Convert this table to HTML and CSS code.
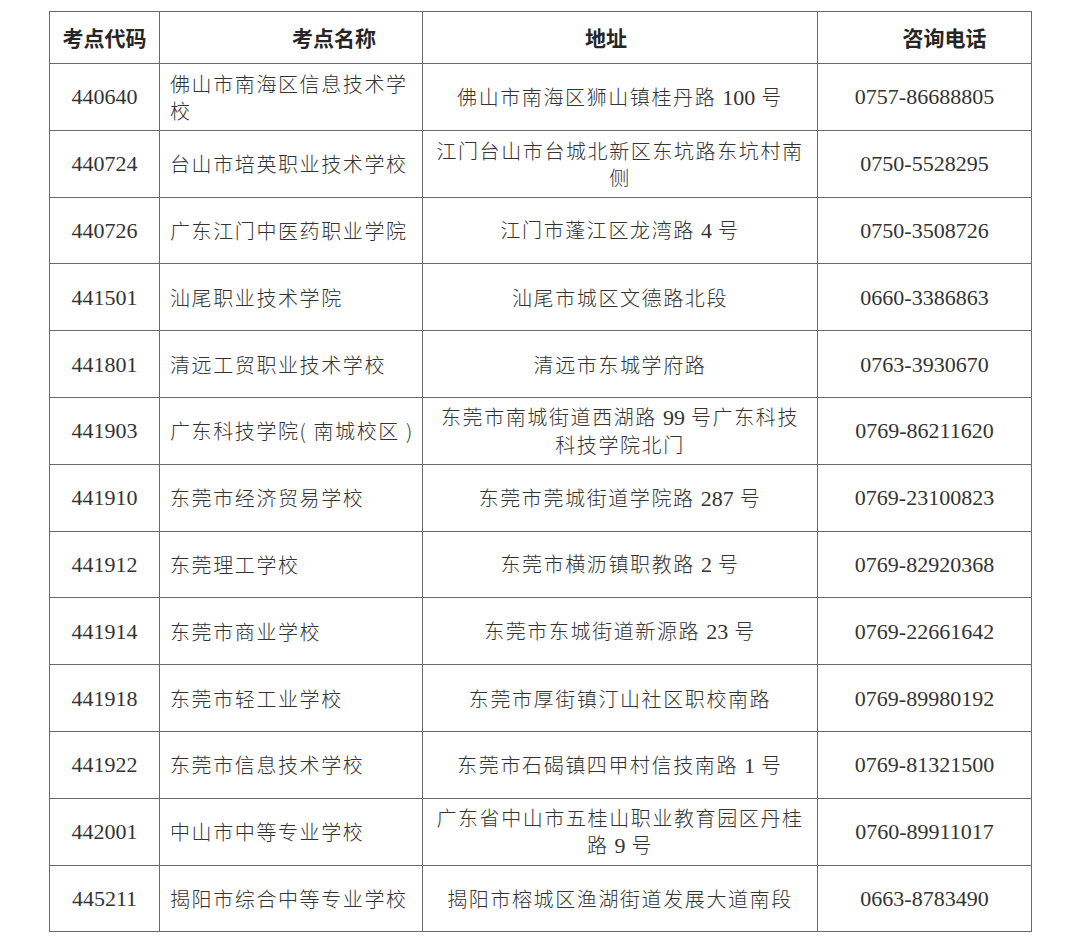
FILE: index.html
```html
<!DOCTYPE html>
<html lang="zh-CN">
<head>
<meta charset="utf-8">
<title>考点信息</title>
<link rel="stylesheet" href="styles.css">
</head>
<body>
<table class="sites">
  <colgroup>
    <col class="c-code">
    <col class="c-name">
    <col class="c-addr">
    <col class="c-tel">
  </colgroup>
  <thead>
    <tr>
      <th class="h-code">考点代码</th>
      <th class="h-name">考点名称</th>
      <th class="h-addr">地址</th>
      <th class="h-tel">咨询电话</th>
    </tr>
  </thead>
  <tbody>
    <tr><td class="code">440640</td><td class="name">佛山市南海区信息技术学校</td><td class="addr">佛山市南海区狮山镇桂丹路 <span class="num">100</span> 号</td><td class="tel">0757-86688805</td></tr>
    <tr><td class="code">440724</td><td class="name">台山市培英职业技术学校</td><td class="addr">江门台山市台城北新区东坑路东坑村南侧</td><td class="tel">0750-5528295</td></tr>
    <tr><td class="code">440726</td><td class="name">广东江门中医药职业学院</td><td class="addr">江门市蓬江区龙湾路 <span class="num">4</span> 号</td><td class="tel">0750-3508726</td></tr>
    <tr><td class="code">441501</td><td class="name">汕尾职业技术学院</td><td class="addr">汕尾市城区文德路北段</td><td class="tel">0660-3386863</td></tr>
    <tr><td class="code">441801</td><td class="name">清远工贸职业技术学校</td><td class="addr">清远市东城学府路</td><td class="tel">0763-3930670</td></tr>
    <tr><td class="code">441903</td><td class="name">广东科技学院( 南城校区 )</td><td class="addr">东莞市南城街道西湖路 <span class="num">99</span> 号广东科技科技学院北门</td><td class="tel">0769-86211620</td></tr>
    <tr><td class="code">441910</td><td class="name">东莞市经济贸易学校</td><td class="addr">东莞市莞城街道学院路 <span class="num">287</span> 号</td><td class="tel">0769-23100823</td></tr>
    <tr><td class="code">441912</td><td class="name">东莞理工学校</td><td class="addr">东莞市横沥镇职教路 <span class="num">2</span> 号</td><td class="tel">0769-82920368</td></tr>
    <tr><td class="code">441914</td><td class="name">东莞市商业学校</td><td class="addr">东莞市东城街道新源路 <span class="num">23</span> 号</td><td class="tel">0769-22661642</td></tr>
    <tr><td class="code">441918</td><td class="name">东莞市轻工业学校</td><td class="addr">东莞市厚街镇汀山社区职校南路</td><td class="tel">0769-89980192</td></tr>
    <tr><td class="code">441922</td><td class="name">东莞市信息技术学校</td><td class="addr">东莞市石碣镇四甲村信技南路 <span class="num">1</span> 号</td><td class="tel">0769-81321500</td></tr>
    <tr><td class="code">442001</td><td class="name">中山市中等专业学校</td><td class="addr">广东省中山市五桂山职业教育园区丹桂路 <span class="num">9</span> 号</td><td class="tel">0760-89911017</td></tr>
    <tr><td class="code">445211</td><td class="name">揭阳市综合中等专业学校</td><td class="addr">揭阳市榕城区渔湖街道发展大道南段</td><td class="tel">0663-8783490</td></tr>
  </tbody>
</table>
</body>
</html>
```
FILE: styles.css
```css
html, body {
  margin: 0;
  padding: 0;
  background: #ffffff;
}

body {
  font-family: "Noto Sans CJK SC", "Noto Sans", sans-serif;
  color: #2e2e2e;
}

.sites {
  margin: 11px 0 0 49px;
  width: 982px;
  table-layout: fixed;
  border-collapse: collapse;
}

.c-code { width: 110px; }
.c-name { width: 263px; }
.c-addr { width: 395px; }
.c-tel  { width: 214px; }

.sites th,
.sites td {
  border: 1px solid #6a6a6a;
  vertical-align: middle;
  padding: 0;
}

.sites thead tr {
  height: 52px;
}

.sites tbody tr {
  height: 66.8px;
}

.sites th {
  font-family: "Noto Sans CJK SC", sans-serif;
  font-weight: 700;
  font-size: 21px;
  line-height: 27px;
  color: #262626;
  text-align: center;
}

.sites .h-name { padding-left: 86px; }
.sites .h-addr { padding-right: 28px; }
.sites .h-tel  { padding-left: 40px; }

.sites .code,
.sites .tel,
.sites .num {
  font-family: "Liberation Serif", "Times New Roman", serif;
  font-size: 22px;
  letter-spacing: 0;
  color: #333333;
}

.sites .code,
.sites .tel {
  text-align: center;
  line-height: 27px;
}

.sites .name,
.sites .addr {
  font-family: "Noto Sans CJK SC", sans-serif;
  font-weight: 300;
  font-size: 20px;
  letter-spacing: 1.6px;
  line-height: 27px;
  color: #333333;
}

.sites .name {
  text-align: left;
  padding: 0 8px 0 10px;
}

.sites .addr {
  text-align: center;
  padding: 0 10px;
}
```
